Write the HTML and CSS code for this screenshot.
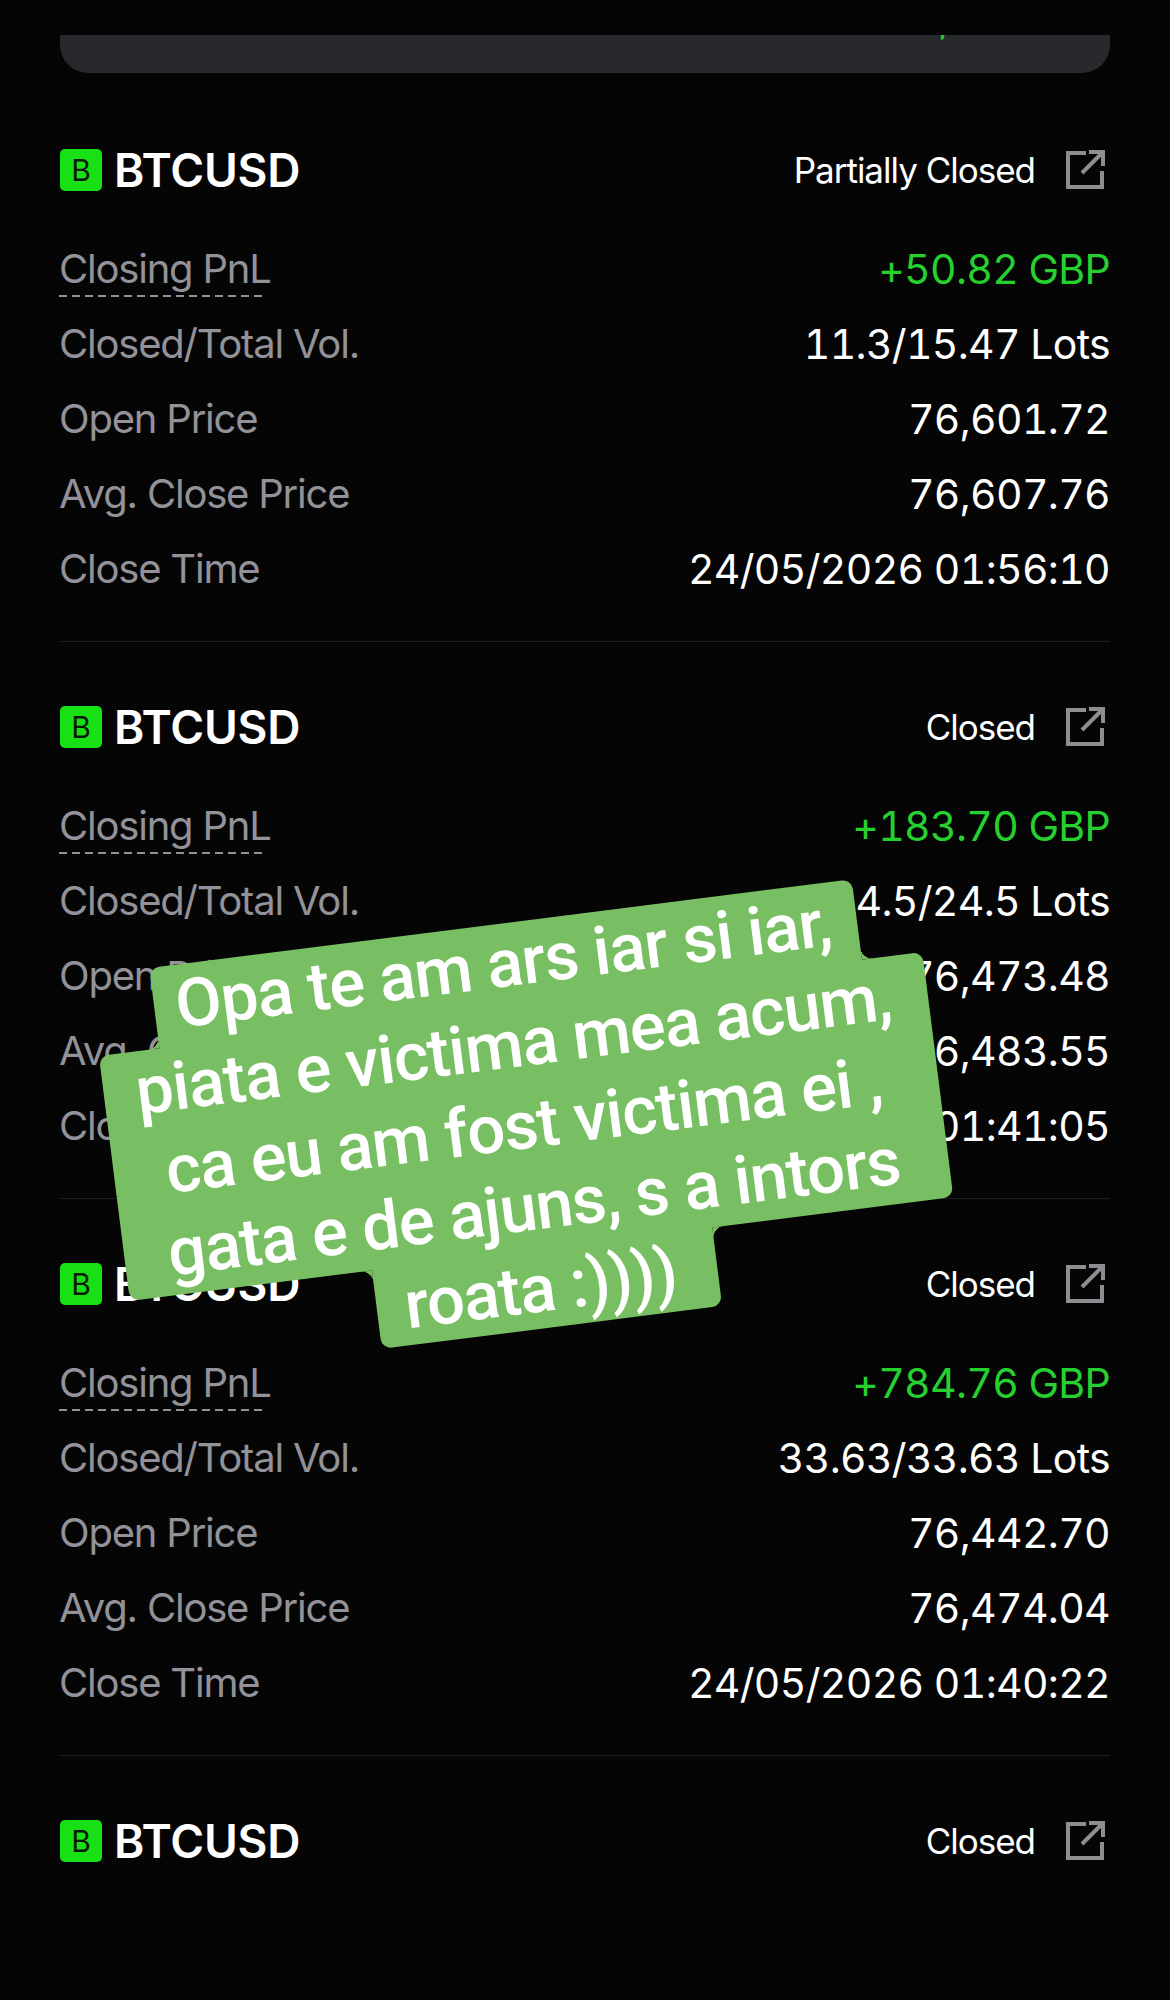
FILE: index.html
```html
<!DOCTYPE html>
<html lang="en">
<head>
<meta charset="utf-8">
<title>Closed positions</title>
<link rel="stylesheet" href="styles.css">
</head>
<body>
<main class="page">
  <div class="summary">
    <div class="summary-row"><span class="summary-label">Total PnL</span><span class="summary-value">+1,019.28</span></div>
  </div>

  <section class="trade">
    <header class="trade-head">
      <span class="badge">B</span><span class="symbol">BTCUSD</span>
      <span class="status">Partially Closed</span>
      <svg class="share" viewBox="0 0 40 40"><path d="M21 3H3V37H37V21M17 23L37 3M24 2H38V16"/></svg>
    </header>
    <div class="row"><span class="label dashed">Closing PnL</span><span class="value gain">+50.82 GBP</span></div>
    <div class="row"><span class="label">Closed/Total Vol.</span><span class="value">11.3/15.47 Lots</span></div>
    <div class="row"><span class="label">Open Price</span><span class="value">76,601.72</span></div>
    <div class="row"><span class="label">Avg. Close Price</span><span class="value">76,607.76</span></div>
    <div class="row"><span class="label">Close Time</span><span class="value">24/05/2026 01:56:10</span></div>
  </section>

  <section class="trade">
    <header class="trade-head">
      <span class="badge">B</span><span class="symbol">BTCUSD</span>
      <span class="status">Closed</span>
      <svg class="share" viewBox="0 0 40 40"><path d="M21 3H3V37H37V21M17 23L37 3M24 2H38V16"/></svg>
    </header>
    <div class="row"><span class="label dashed">Closing PnL</span><span class="value gain">+183.70 GBP</span></div>
    <div class="row"><span class="label">Closed/Total Vol.</span><span class="value">24.5/24.5 Lots</span></div>
    <div class="row"><span class="label">Open Price</span><span class="value">76,473.48</span></div>
    <div class="row"><span class="label">Avg. Close Price</span><span class="value">76,483.55</span></div>
    <div class="row"><span class="label">Close Time</span><span class="value">24/05/2026 01:41:05</span></div>
  </section>

  <section class="trade">
    <header class="trade-head">
      <span class="badge">B</span><span class="symbol">BTCUSD</span>
      <span class="status">Closed</span>
      <svg class="share" viewBox="0 0 40 40"><path d="M21 3H3V37H37V21M17 23L37 3M24 2H38V16"/></svg>
    </header>
    <div class="row"><span class="label dashed">Closing PnL</span><span class="value gain">+784.76 GBP</span></div>
    <div class="row"><span class="label">Closed/Total Vol.</span><span class="value">33.63/33.63 Lots</span></div>
    <div class="row"><span class="label">Open Price</span><span class="value">76,442.70</span></div>
    <div class="row"><span class="label">Avg. Close Price</span><span class="value">76,474.04</span></div>
    <div class="row"><span class="label">Close Time</span><span class="value">24/05/2026 01:40:22</span></div>
  </section>

  <section class="trade last">
    <header class="trade-head">
      <span class="badge">B</span><span class="symbol">BTCUSD</span>
      <span class="status">Closed</span>
      <svg class="share" viewBox="0 0 40 40"><path d="M21 3H3V37H37V21M17 23L37 3M24 2H38V16"/></svg>
    </header>
  </section>
</main>

<aside class="sticker">
  <div class="line line-a">Opa te am ars iar si iar,</div>
  <div class="line line-b">piata e victima mea acum,</div>
  <div class="line line-b">ca eu am fost victima ei ,</div>
  <div class="line line-b">gata e de ajuns, s a intors</div>
  <div class="line line-c">roata :))))</div>
</aside>
</body>
</html>
```

FILE: styles.css
```css
* { box-sizing: border-box; }
html, body { margin: 0; background: #050506; }
body { width: 1170px; height: 2000px; overflow: hidden; position: relative; font-family: Inter, "Liberation Sans", sans-serif; }
.page { padding: 35px 60px 0; }
.summary { height: 38px; margin-bottom: 12px; background: #28292c; border-radius: 0 0 28px 28px; overflow: hidden; }
.summary-row { display: flex; justify-content: space-between; margin-top: -38px; height: 44px; font-size: 38px; line-height: 44px; padding: 0 42px; }
.summary-label { color: #9a9aa0; }
.summary-value { color: #26d12f; }
.trade { padding: 60px 0 35px; border-bottom: 1px solid #1d1e20; }
.trade.last { border-bottom: 0; }
.trade-head { display: flex; align-items: center; height: 50px; margin-bottom: 36px; }
.badge { width: 42px; height: 42px; border-radius: 5px; background: #17e014; color: #0b1a08; font-size: 30px; display: flex; align-items: center; justify-content: center; }
.symbol { margin-left: 12px; font-size: 46px; font-weight: 600; color: #fff; letter-spacing: -0.2px; }
.status { margin-left: auto; font-size: 35px; color: #fff; letter-spacing: -1px; }
.share { width: 40px; height: 40px; margin: 0 5px 0 30px; fill: none; stroke: #8e8e92; stroke-width: 4; }
.row { display: flex; justify-content: space-between; align-items: center; height: 75px; }
.label { margin-left: -1px; font-size: 40px; color: #929298; letter-spacing: -1.2px; }
.label.dashed { padding: 3px 0; line-height: 50px; background: repeating-linear-gradient(90deg, #929298 0 8px, transparent 8px 13px) left bottom / 208px 2px no-repeat; }
.value { font-size: 41px; color: #fff; font-variant-numeric: tabular-nums; letter-spacing: -0.67px; }
.value.gain { color: #26d12f; }
.sticker { position: absolute; left: 108px; top: 922px; width: 836px; display: flex; flex-direction: column; align-items: center; transform: rotate(-7.2deg); font-family: Roboto, "Liberation Sans", sans-serif; font-weight: 500; font-size: 67px; letter-spacing: -0.9px; color: #fff; }
.line { position: relative; height: 82px; padding-right: 5px; line-height: 80px; background: #78bf63; text-align: center; white-space: nowrap; }
.line + .line { margin-top: -1px; height: 83px; }
.line-a { width: 708px; border-radius: 10px 10px 0 0; }
.line-b { width: 830px; }
.line-b:nth-child(2) { border-radius: 10px 10px 0 0; }
.line-b:nth-child(4) { border-radius: 0 0 10px 10px; }
.line.line-c { width: 343px; height: 80px; padding-right: 12px; border-radius: 0 0 10px 10px; }
.line-a::before, .line-a::after, .line-c::before, .line-c::after { content: ""; position: absolute; width: 12px; height: 12px; }
.line-a::before { left: -12px; bottom: 1px; background: radial-gradient(circle at 0 0, transparent 12px, #78bf63 12.5px); }
.line-a::after { right: -12px; bottom: 1px; background: radial-gradient(circle at 100% 0, transparent 12px, #78bf63 12.5px); }
.line-c::before { left: -12px; top: 1px; background: radial-gradient(circle at 0 100%, transparent 12px, #78bf63 12.5px); }
.line-c::after { right: -12px; top: 1px; background: radial-gradient(circle at 100% 100%, transparent 12px, #78bf63 12.5px); }
```
